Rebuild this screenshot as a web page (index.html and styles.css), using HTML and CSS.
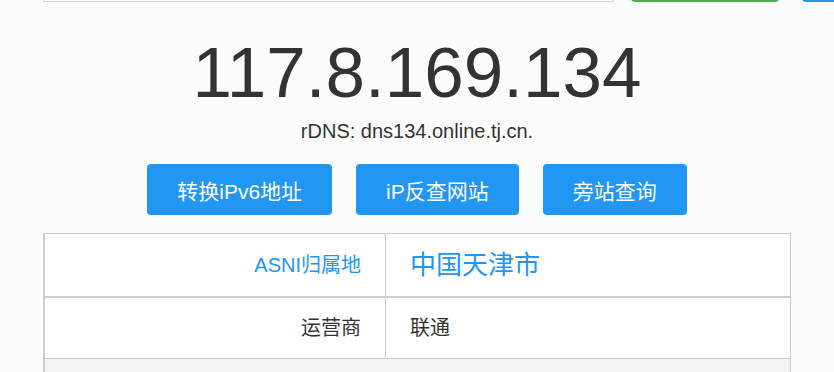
FILE: index.html
```html
<!DOCTYPE html>
<html lang="zh-CN">
<head>
    <meta charset="UTF-8">
    <meta name="viewport" content="width=device-width, initial-scale=1.0">
    <title>117.8.169.134 - IP查询</title>
    <link rel="stylesheet" href="styles.css">
</head>
<body>
    <div class="search-bar">
        <input type="text" class="search-input" value="117.8.169.134">
        <button class="search-btn">查询</button>
        <button class="extra-btn">更多</button>
    </div>

    <div class="ip-box">
        <h1 class="ip-title">117.8.169.134</h1>
        <p class="rdns">rDNS: dns134.online.tj.cn.</p>

        <div class="action-row">
            <a class="action-btn" href="#">转换iPv6地址</a>
            <a class="action-btn" href="#">iP反查网站</a>
            <a class="action-btn" href="#">旁站查询</a>
        </div>

        <table class="info-table">
            <tr class="row-main">
                <td class="label label-link">ASNI归属地</td>
                <td class="value value-big">中国天津市</td>
            </tr>
            <tr>
                <td class="label">运营商</td>
                <td class="value">联通</td>
            </tr>
            <tr class="row-grey">
                <td colspan="2">iP数字地址：1963436422</td>
            </tr>
        </table>
    </div>
</body>
</html>
```

FILE: styles.css
```css
    body {
        font-family: 'Liberation Sans', Arial, 'Noto Sans CJK SC', sans-serif;
        background-color: #fcfcfc;
        color: #333;
        margin: 0;
    }
    .search-bar {
        width: 748px;
        margin: -38px auto 0 auto;
        height: 40px;
        display: flex;
        gap: 17px;
    }
    .search-input {
        width: 571px;
        flex: none;
        box-sizing: border-box;
        height: 40px;
        border: 1px solid #d4d4d4;
        background: #fff;
        font-size: 16px;
        padding: 0 12px;
    }
    .search-btn {
        flex: none;
        width: 148px;
        height: 40px;
        border: none;
        border-radius: 4px;
        background-color: #4caf50;
        color: white;
        font-size: 16px;
    }
    .extra-btn {
        flex: none;
        width: 80px;
        height: 40px;
        margin-left: 6px;
        border: none;
        border-radius: 4px;
        background-color: #2196f3;
        color: white;
        font-size: 16px;
    }
    .ip-box {
        width: 748px;
        margin: 0 auto;
        text-align: center;
    }
    .ip-title {
        font-size: 71px;
        font-weight: normal;
        line-height: 72px;
        margin: 35px 0 0 0;
        color: #333;
    }
    .rdns {
        font-size: 20px;
        line-height: 24px;
        margin: 10px 0 0 0;
        color: #333;
    }
    .action-row {
        display: flex;
        justify-content: center;
        gap: 24px;
        margin-top: 21px;
    }
    .action-btn {
        display: flex;
        align-items: center;
        height: 51px;
        padding: 0 30px;
        background-color: #2196f3;
        color: white;
        border-radius: 4px;
        font-size: 21px;
        text-decoration: none;
    }
    .info-table {
        width: 100%;
        margin-top: 18px;
        border-collapse: collapse;
        background-color: white;
        border: 1px solid #ccc;
        border-left: 2px solid #ccc;
        text-align: left;
    }
    .info-table td {
        border: 1px solid #ccc;
        padding: 16px 24px;
        font-size: 20px;
        line-height: 28px;
    }
    .row-main td {
        border-bottom: 2px solid #ccc;
    }
    .label {
        width: 292px;
        text-align: right;
        color: #333;
    }
    .label-link {
        color: #2196f3;
    }
    .value-big {
        font-size: 26px !important;
        line-height: 30px !important;
        color: #2196f3;
    }
    .row-grey td {
        background-color: #f3f3f3;
        text-align: center;
    }
```
